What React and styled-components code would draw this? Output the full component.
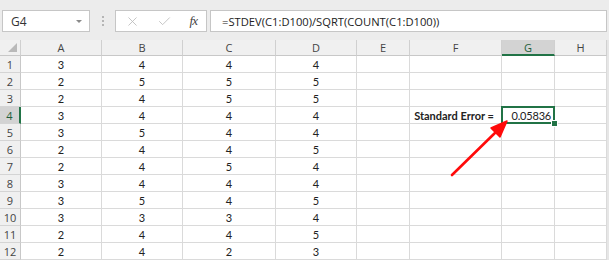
import React from "react";
import styled, { createGlobalStyle } from "styled-components";
import { X, Check } from "lucide-react";

const GlobalStyle = createGlobalStyle`
  html, body {
    margin: 0;
    padding: 0;
    background: #e6e6e6;
  }
  * { box-sizing: border-box; }
`;

const COLS = [
  { key: "A", width: 81 },
  { key: "B", width: 81 },
  { key: "C", width: 93 },
  { key: "D", width: 81 },
  { key: "E", width: 53 },
  { key: "F", width: 92 },
  { key: "G", width: 53 },
  { key: "H", width: 52 },
];

const DATA = [
  [3, 4, 4, 4],
  [2, 5, 5, 5],
  [2, 4, 5, 5],
  [3, 4, 4, 4],
  [3, 5, 4, 4],
  [2, 4, 4, 5],
  [2, 4, 5, 4],
  [3, 4, 4, 4],
  [3, 5, 4, 5],
  [3, 3, 3, 4],
  [2, 4, 4, 5],
  [2, 4, 2, 3],
];

function App() {
  return (
    <>
      <GlobalStyle />
      <Window>
        <Toolbar>
          <NameBox>
            G4
            <Caret />
          </NameBox>
          <Grip>
            <span />
            <span />
            <span />
          </Grip>
          <FxButtons>
            <X size={15} strokeWidth={1.3} color="#b9b9b9" />
            <Check size={15} strokeWidth={1.3} color="#b9b9b9" />
            <FxLabel>fx</FxLabel>
          </FxButtons>
          <FormulaInput>=STDEV(C1:D100)/SQRT(COUNT(C1:D100))</FormulaInput>
        </Toolbar>

        <Sheet>
          <Grid>
            <Corner />
            {COLS.map((c) => (
              <ColHeader key={c.key} $active={c.key === "G"}>
                {c.key}
              </ColHeader>
            ))}
            {DATA.map((row, i) => (
              <React.Fragment key={i}>
                <RowHeader $active={i === 3}>{i + 1}</RowHeader>
                {row.map((v, j) => (
                  <Cell key={j}>{v}</Cell>
                ))}
                <Cell />
                <Cell $align="right" $bold>
                  {i === 3 ? "Standard Error =" : ""}
                </Cell>
                {i === 3 ? <ActiveCell>0.05836</ActiveCell> : <Cell />}
                <Cell />
              </React.Fragment>
            ))}
          </Grid>
          <Arrow width="609" height="220" viewBox="0 0 609 220">
            <line x1="452" y1="135" x2="498" y2="90" stroke="#ff0a0a" strokeWidth="2.6" strokeLinecap="round" />
            <polygon points="507,81 500,97 491,88" fill="#ff0a0a" stroke="#ff0a0a" strokeWidth="1.5" strokeLinejoin="round" />
          </Arrow>
        </Sheet>
      </Window>
    </>
  );
}

const Window = styled.div`
  width: 609px;
  height: 260px;
  overflow: hidden;
  background: #e6e6e6;
  font-family: "Lato", "Liberation Sans", sans-serif;
`;

const Toolbar = styled.div`
  display: flex;
  align-items: stretch;
  height: 40px;
  padding: 10px 2px 8px 2px;
  background: #ececec;
  border-top: 0;
`;

const NameBox = styled.div`
  position: relative;
  display: flex;
  align-items: center;
  width: 88px;
  padding-left: 8px;
  background: #fff;
  border: 1px solid #c6c6c6;
  font-family: "Open Sans", "Liberation Sans", sans-serif;
  font-size: 12px;
  color: #333;
`;

const Caret = styled.span`
  position: absolute;
  right: 7px;
  top: 9px;
  width: 0;
  height: 0;
  border-left: 3px solid transparent;
  border-right: 3px solid transparent;
  border-top: 3px solid #8a8a8a;
`;

const Grip = styled.div`
  width: 25px;
  display: flex;
  flex-direction: column;
  align-items: center;
  justify-content: center;
  gap: 2px;

  span {
    width: 2px;
    height: 2px;
    background: #b5b5b5;
  }
`;

const FxButtons = styled.div`
  width: 92px;
  display: flex;
  align-items: center;
  justify-content: space-between;
  padding: 0 9px 0 9px;
  background: #fff;
  border: 1px solid #c6c6c6;
`;

const FxLabel = styled.span`
  font-family: "Liberation Serif", serif;
  font-style: italic;
  font-size: 13px;
  color: #444;
  letter-spacing: -1px;
`;

const FormulaInput = styled.div`
  flex: 1;
  margin-left: 3px;
  display: flex;
  align-items: center;
  padding-left: 11px;
  background: #fff;
  border: 1px solid #c6c6c6;
  font-family: "Open Sans", "Liberation Sans", sans-serif;
  font-size: 11.2px;
  color: #222;
  white-space: nowrap;
`;

const Sheet = styled.div`
  position: relative;
  height: 220px;
`;

const Grid = styled.div`
  display: grid;
  grid-template-columns: 21px ${COLS.map((c) => c.width + "px").join(" ")};
  grid-template-rows: 16px repeat(12, 17px);
  width: 607px;
  background: #fff;
`;

const Corner = styled.div`
  position: relative;
  background: #f0f0f0;
  border-right: 1px solid #d0d0d0;
  border-bottom: 1px solid #c8c8c8;

  &::after {
    content: "";
    position: absolute;
    right: 3px;
    bottom: 3px;
    width: 0;
    height: 0;
    border-left: 9px solid transparent;
    border-bottom: 9px solid #b9b9b9;
  }
`;

const ColHeader = styled.div`
  display: flex;
  align-items: center;
  justify-content: center;
  background: ${(p) => (p.$active ? "#d3d3d3" : "#f0f0f0")};
  border-right: 1px solid #d0d0d0;
  border-bottom: ${(p) => (p.$active ? "2px solid #217346" : "1px solid #c8c8c8")};
  font-family: "Open Sans", "Liberation Sans", sans-serif;
  font-size: 11px;
  color: ${(p) => (p.$active ? "#1e5e3a" : "#444")};
  padding-top: ${(p) => (p.$active ? "1px" : "0")};
`;

const RowHeader = styled.div`
  display: flex;
  align-items: center;
  justify-content: center;
  background: ${(p) => (p.$active ? "#d3d3d3" : "#f0f0f0")};
  border-right: ${(p) => (p.$active ? "2px solid #217346" : "1px solid #c8c8c8")};
  border-bottom: 1px solid #d4d4d4;
  font-family: "Open Sans", "Liberation Sans", sans-serif;
  font-size: 11px;
  color: ${(p) => (p.$active ? "#1e5e3a" : "#444")};
`;

const Cell = styled.div`
  display: flex;
  align-items: center;
  justify-content: ${(p) => (p.$align === "right" ? "flex-end" : "center")};
  padding-right: ${(p) => (p.$align === "right" ? "7px" : "0")};
  border-right: 1px solid #dadada;
  border-bottom: 1px solid #dadada;
  font-size: 11px;
  font-weight: ${(p) => (p.$bold ? 700 : 400)};
  color: #222;
  white-space: nowrap;
`;

const ActiveCell = styled(Cell)`
  position: relative;
  justify-content: flex-end;
  padding-right: 3px;
  letter-spacing: -0.2px;

  &::before {
    content: "";
    position: absolute;
    left: -1px;
    top: -1px;
    right: -1px;
    bottom: -1px;
    border: 2px solid #217346;
  }

  &::after {
    content: "";
    position: absolute;
    right: -4px;
    bottom: -4px;
    width: 5px;
    height: 5px;
    background: #217346;
    border: 1px solid #fff;
  }
`;

const Arrow = styled.svg`
  position: absolute;
  left: 0;
  top: 0;
  pointer-events: none;
`;

export default App;
